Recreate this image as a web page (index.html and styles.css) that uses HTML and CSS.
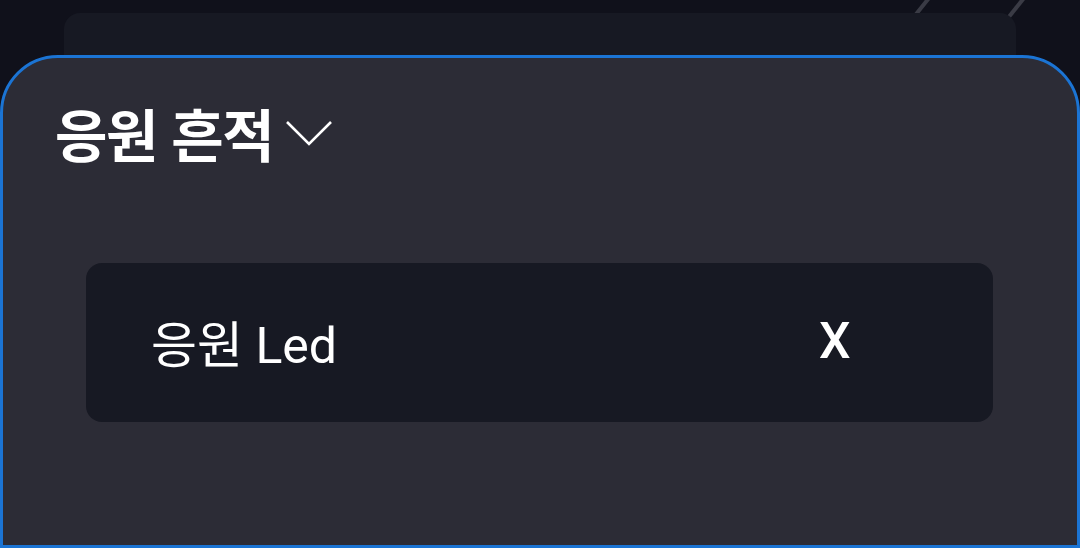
FILE: index.html
```html
<!DOCTYPE html>
<html lang="ko">
<head>
<meta charset="utf-8">
<link rel="stylesheet" href="styles.css">
</head>
<body>
<div class="screen">
  <svg class="deco" width="1080" height="60" viewBox="0 0 1080 60">
    <line x1="929" y1="-2" x2="905" y2="28" stroke="#3a3b45" stroke-width="4"/>
    <line x1="1024" y1="-2" x2="1000" y2="28" stroke="#3a3b45" stroke-width="4"/>
  </svg>
  <div class="back-card"></div>
  <section class="panel">
    <header class="panel-head">
      <h1 class="title">응원 흔적</h1>
      <svg class="chevron" width="48" height="28" viewBox="0 0 48 28">
        <polyline points="2,3 24,25 46,3" fill="none" stroke="#ffffff" stroke-width="2.6"/>
      </svg>
    </header>
    <div class="item">
      <span class="item-name">응원 Led</span>
      <span class="item-close">X</span>
    </div>
  </section>
</div>
</body>
</html>
```
FILE: styles.css
```css
html, body {
  margin: 0;
  padding: 0;
  background: #10111b;
}
.screen {
  position: relative;
  width: 1080px;
  height: 548px;
  overflow: hidden;
  background: #10111b;
  font-family: Roboto, "Noto Sans CJK KR", sans-serif;
  color: #ffffff;
}
.deco {
  position: absolute;
  left: 0;
  top: 0;
}
.back-card {
  position: relative;
  margin: 13px 64px 0 64px;
  height: 80px;
  background: #171923;
  border-radius: 16px;
}
.panel {
  position: absolute;
  left: 0;
  top: 55px;
  width: 1080px;
  height: 493px;
  box-sizing: border-box;
  border: 3px solid #1b74d4;
  border-radius: 58px 58px 0 0;
  background: #2c2c36;
  padding: 34px 0 0 52px;
}
.panel-head {
  display: flex;
  align-items: center;
  gap: 12px;
}
.title {
  margin: 0;
  font-family: "Noto Sans CJK KR", sans-serif;
  font-weight: 700;
  font-size: 57px;
  line-height: 80px;
  letter-spacing: -1.5px;
}
.chevron {
  margin-top: 2px;
}
.item {
  margin: 91px 84px 0 31px;
  height: 159px;
  background: #171923;
  border-radius: 16px;
  display: flex;
  align-items: center;
  padding: 0 0 4px 65px;
  box-sizing: border-box;
}
.item-name {
  font-size: 50px;
  width: 668px;
}
.item-close {
  font-size: 50px;
  font-weight: 500;
}
```
